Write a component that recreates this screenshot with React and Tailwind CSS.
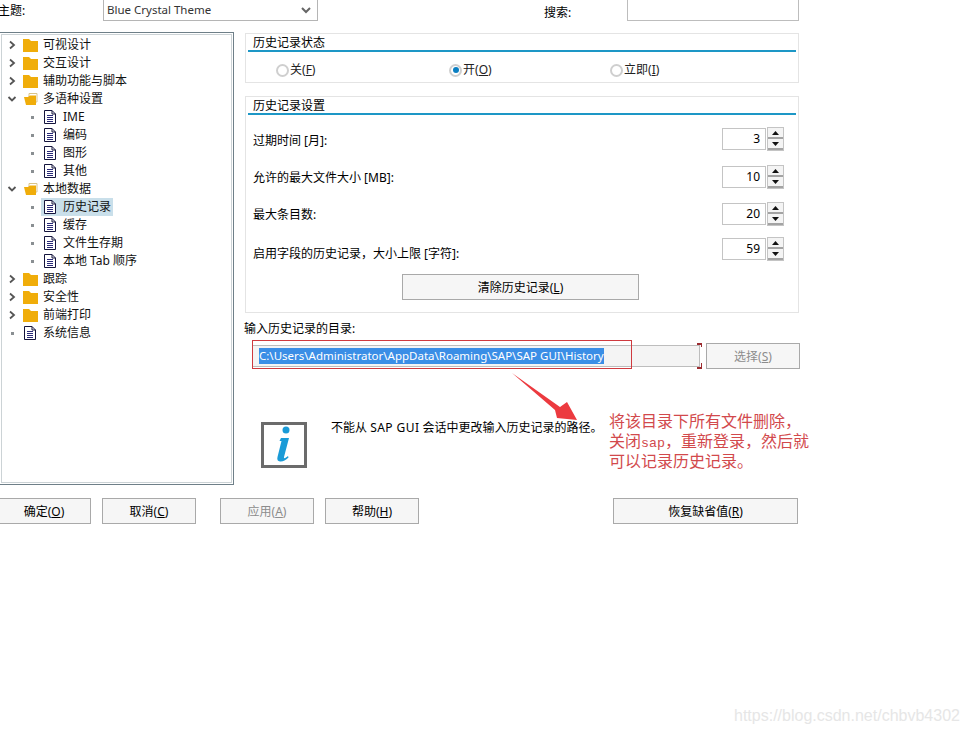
import React from 'react';

const FONT = { fontFamily: '"Noto Sans", "Noto Sans CJK SC", sans-serif' };

const tree = [
  { label: '可视设计', kind: 'closed' },
  { label: '交互设计', kind: 'closed' },
  { label: '辅助功能与脚本', kind: 'closed' },
  { label: '多语种设置', kind: 'open' },
  { label: 'IME', kind: 'child' },
  { label: '编码', kind: 'child' },
  { label: '图形', kind: 'child' },
  { label: '其他', kind: 'child' },
  { label: '本地数据', kind: 'open' },
  { label: '历史记录', kind: 'child', selected: true },
  { label: '缓存', kind: 'child' },
  { label: '文件生存期', kind: 'child' },
  { label: '本地 Tab 顺序', kind: 'child' },
  { label: '跟踪', kind: 'closed' },
  { label: '安全性', kind: 'closed' },
  { label: '前端打印', kind: 'closed' },
  { label: '系统信息', kind: 'leaf' },
];

const spinners = [
  { label: '过期时间 [月]:', value: 3, mt: 'mt-[13px]', lt: 'pt-[3px]' },
  { label: '允许的最大文件大小 [MB]:', value: 10, mt: 'mt-[16px]', lt: 'pt-[2px]' },
  { label: '最大条目数:', value: 20, mt: 'mt-[15px]', lt: 'pt-[2px]' },
  { label: '启用字段的历史记录，大小上限 [字符]:', value: 59, mt: 'mt-[13px]', lt: 'pt-[9px]' },
];

const Chevron = ({ open }) => (
  <svg width="10" height="10" viewBox="0 0 10 10" className="shrink-0">
    <path
      d={open ? 'M1.5 3 L5 6.5 L8.5 3' : 'M3 1.5 L7 5 L3 8.5'}
      fill="none"
      stroke="#555"
      strokeWidth="1.8"
    />
  </svg>
);

const Folder = ({ open }) => (
  <svg width="15" height="13" viewBox="0 0 15 13" className="shrink-0 block">
    {open ? (
      <>
        <path d="M6 0.5 H14 V9 H6 Z" fill="#fff" stroke="#d9c48a" strokeWidth="1" />
        <path d="M1 4 H5 L7 2.5 H13 V12 H3 Z" fill="#f0ad0a" />
      </>
    ) : (
      <path d="M0 0 H6 L8 2 H15 V13 H0 Z" fill="#f0ad0a" />
    )}
  </svg>
);

const Doc = () => (
  <svg width="12" height="14" viewBox="0 0 12 14" className="shrink-0">
    <path d="M0.5 0.5 H8 L11.5 4 V13.5 H0.5 Z" fill="#fff" stroke="#14143c" strokeWidth="1" />
    <path d="M8 0.5 V4 H11.5" fill="none" stroke="#14143c" strokeWidth="1" />
    <path d="M3 5.5 H9 M3 7.5 H9 M3 9.5 H9 M3 11.5 H9" stroke="#2a2a78" strokeWidth="1" />
  </svg>
);

const Dot = () => <span className="w-[3px] h-[3px] bg-[#8a8f92] shrink-0" />;

const TreeRow = ({ item }) => {
  if (item.kind === 'child') {
    return (
      <div className="flex items-center h-[18px] pl-[29px]">
        <Dot />
        <div
          className={`flex items-center h-[18px] ml-[7px] pl-[3px] pr-[2px] ${item.selected ? 'bg-[#c9dfea]' : ''}`}
        >
          <Doc />
          <span className="ml-[7px] whitespace-nowrap">{item.label}</span>
        </div>
      </div>
    );
  }
  if (item.kind === 'leaf') {
    return (
      <div className="flex items-center h-[18px] pl-[9px]">
        <Dot />
        <div className="flex items-center ml-[10px]">
          <Doc />
          <span className="ml-[7px] whitespace-nowrap">{item.label}</span>
        </div>
      </div>
    );
  }
  return (
    <div className="flex items-center h-[18px] pl-[5px]">
      <Chevron open={item.kind === 'open'} />
      <span className="ml-[6px]">
        <Folder open={item.kind === 'open'} />
      </span>
      <span className="ml-[5px] whitespace-nowrap">{item.label}</span>
    </div>
  );
};

const GroupTitle = ({ children }) => (
  <div className="mx-[2px] border-b-2 border-[#1d97c6] h-[18px] pl-[5px] leading-[17px] text-[12px] text-black">
    {children}
  </div>
);

const Radio = ({ checked, label, hot, className }) => (
  <div className={`flex items-center ${className}`}>
    <span className="w-[13px] h-[13px] rounded-full border-2 border-[#cfcfcf] bg-white flex items-center justify-center">
      {checked && <span className="w-[6px] h-[6px] rounded-full bg-[#0a7fc2]" />}
    </span>
    <span className="ml-[1px] whitespace-nowrap">
      {label}(<u>{hot}</u>)
    </span>
  </div>
);

const SpinButton = ({ up }) => (
  <div className="h-[11px] bg-[#f4f4f4] flex items-center justify-center border-b-2 border-[#a3a3a3]">
    <svg width="7" height="4" viewBox="0 0 7 4">
      <path d={up ? 'M3.5 0 L7 4 H0 Z' : 'M0 0 H7 L3.5 4 Z'} fill="#111" />
    </svg>
  </div>
);

const Spinner = ({ label, value, mt, lt }) => (
  <div className={`flex items-center justify-between h-[22px] pl-[7px] pr-[14px] ${mt}`}>
    <span className={`whitespace-nowrap ${lt}`}>{label}</span>
    <div className="flex items-center">
      <div className="w-[44px] h-[22px] border border-[#c4c4c4] text-right pr-[5px] leading-[20px]">
        {value}
      </div>
      <div className="w-[17px] ml-[1px] border border-[#c4c4c4]">
        <SpinButton up />
        <SpinButton />
      </div>
    </div>
  </div>
);

const Btn = ({ children, disabled, className }) => (
  <div
    className={`h-[26px] pt-[1px] flex items-center justify-center border border-[#a9a9a9] bg-[#f6f6f6] ${disabled ? 'text-[#8c8c8c]' : 'text-black'} ${className}`}
  >
    {children}
  </div>
);

export default function App() {
  return (
    <div
      className="relative w-[967px] h-[734px] overflow-hidden bg-white text-[12px] text-black"
      style={FONT}
    >
      {/* Top row */}
      <div className="flex h-[21px]">
        <span className="-ml-[2px] w-[105px] mt-[3px] leading-[16px] whitespace-nowrap">主题:</span>
        <div className="w-[215px] h-[21px] border-r border-b border-l border-[#b5b5b5] flex items-center justify-between pl-[3px] pr-[6px] text-[#333]">
          <span className="text-[11.5px]">Blue Crystal Theme</span>
          <svg width="10" height="7" viewBox="0 0 10 7">
            <path d="M1 1 L5 5 L9 1" fill="none" stroke="#666" strokeWidth="2" />
          </svg>
        </div>
        <span className="ml-[226px] w-[83px] mt-[5px] leading-[16px]">搜索:</span>
        <div className="w-[172px] h-[21px] border-r border-b border-l border-[#bdbdbd]" />
      </div>

      <div className="flex mt-[11px]">
        {/* Tree */}
        <div className="-ml-[1px] w-[235px] h-[453px] border border-[#6e7f88] p-[1px]">
          <div className="h-full border border-[#ccd3d6] pt-[1px] text-[#111]">
            {tree.map((item) => (
              <TreeRow key={item.label} item={item} />
            ))}
          </div>
        </div>

        {/* Right column */}
        <div className="ml-[11px] w-[555px] mt-[1px]">
          <div className="h-[50px] w-[554px] border border-[#e4e4e4]">
            <GroupTitle>历史记录状态</GroupTitle>
            <div className="flex mt-[9px] text-[#222]">
              <Radio label="关" hot="F" className="ml-[30px] w-[173px]" />
              <Radio checked label="开" hot="O" className="w-[161px]" />
              <Radio label="立即" hot="I" />
            </div>
          </div>

          <div className="h-[217px] w-[554px] mt-[13px] border border-[#e4e4e4]">
            <GroupTitle>历史记录设置</GroupTitle>
            {spinners.map((s) => (
              <Spinner key={s.label} {...s} />
            ))}
            <Btn className="w-[237px] ml-[156px] mt-[14px]">
              <span>
                清除历史记录(<u>L</u>)
              </span>
            </Btn>
          </div>

          <div className="mt-[8px] -ml-[1px] leading-[16px]">输入历史记录的目录:</div>

          <div className="flex items-center mt-[6px] ml-[7px]">
            <div className="w-[448px] h-[22px] border border-[#bdbdbd] bg-[#f4f4f4] flex items-center pl-[6px]">
              <span className="bg-[#3a8ee6] text-white text-[11.5px] leading-[16px] whitespace-nowrap">
                C:\Users\Administrator\AppData\Roaming\SAP\SAP GUI\History
              </span>
            </div>
            <Btn disabled className="w-[94px] ml-[6px]">
              <span>
                选择(<u>S</u>)
              </span>
            </Btn>
          </div>

          <div className="flex mt-[53px] ml-[16px]">
            <div className="w-[46px] h-[46px] border-[3px] border-[#6b6b6b] flex items-center justify-center shrink-0">
              <svg width="22" height="38" viewBox="0 0 22 38">
                <circle cx="13" cy="4" r="3.5" fill="#1a9bd7" />
                <path
                  d="M8 12 H16 L11 31 Q10.5 33 13 31.5 L15 30 L15.5 31.5 Q11 36 7 35.5 Q3.5 35 4.5 31 L8.5 15 L6.5 15 Z"
                  fill="#1a9bd7"
                />
              </svg>
            </div>
            <span className="ml-[24px] -mt-[2px] leading-[16px] whitespace-nowrap">
              不能从 <span className="tracking-[0.45px]">SAP GUI</span> 会话中更改输入历史记录的路径。
            </span>
          </div>
        </div>
      </div>

      {/* Bottom buttons */}
      <div className="absolute left-0 top-[498px] flex">
        <Btn className="w-[94px] -ml-[3px]">
          <span>
            确定(<u>O</u>)
          </span>
        </Btn>
        <Btn className="w-[94px] ml-[11px]">
          <span>
            取消(<u>C</u>)
          </span>
        </Btn>
        <Btn disabled className="w-[94px] ml-[24px]">
          <span>
            应用(<u>A</u>)
          </span>
        </Btn>
        <Btn className="w-[94px] ml-[11px]">
          <span>
            帮助(<u>H</u>)
          </span>
        </Btn>
        <Btn className="w-[185px] ml-[194px]">
          <span>
            恢复缺省值(<u>R</u>)
          </span>
        </Btn>
      </div>

      {/* Red annotations laid over the dialog */}
      <div className="absolute left-[252px] top-[340px] w-[380px] h-[29px] border border-[#cf3a3f]" />
      <div className="absolute left-[697px] top-[343px] w-[5px] h-[2px] bg-[#9c2b30]" />
      <div className="absolute left-[701px] top-[343px] w-[1px] h-[4px] bg-[#9c2b30]" />
      <div className="absolute left-[697px] top-[367px] w-[5px] h-[2px] bg-[#9c2b30]" />
      <div className="absolute left-[701px] top-[363px] w-[1px] h-[5px] bg-[#9c2b30]" />
      <svg className="absolute left-[505px] top-[368px]" width="75" height="55" viewBox="0 0 75 55">
        <path d="M7 5 L55 39 L62 34 L72 52 L52 50 L50 42 Z" fill="#ec3a3f" />
      </svg>
      <div className="absolute left-[609px] top-[411px] text-[16px] text-[#d2494c] whitespace-nowrap">
        <div className="h-[20px] leading-[20px]">将该目录下所有文件删除，</div>
        <div className="h-[20px] leading-[20px]">
          关闭<span className="text-[13.33px]" style={{ fontFamily: '"Liberation Mono", monospace' }}>sap</span>，重新登录，然后就
        </div>
        <div className="h-[20px] leading-[20px]">可以记录历史记录。</div>
      </div>

      {/* Watermark */}
      <div
        className="absolute left-[734px] top-[707px] text-[16px] leading-[18px] text-[#e6e6e6] whitespace-nowrap"
        style={{ fontFamily: '"Liberation Sans", sans-serif' }}
      >
        https://blog.csdn.net/chbvb4302
      </div>
    </div>
  );
}
